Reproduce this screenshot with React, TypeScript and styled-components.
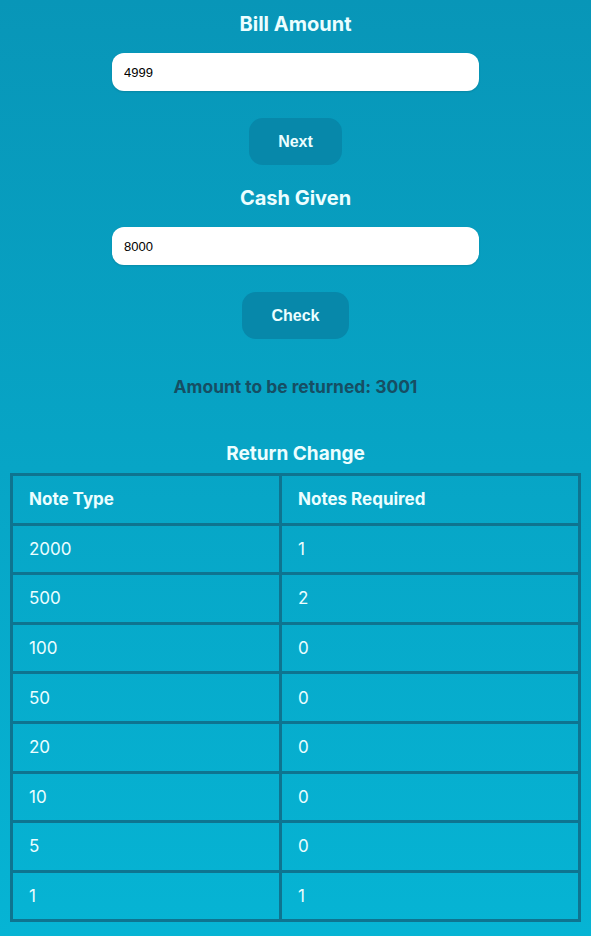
import React from "react";
import styled, { createGlobalStyle } from "styled-components";

const Global = createGlobalStyle`
  html, body { margin: 0; padding: 0; }
  body {
    min-height: 936px;
    background: linear-gradient(180deg, #0896b8 0%, #06b4d4 100%);
    font-family: Inter, "Open Sans", sans-serif;
    color: #ecfeff;
  }
`;

const Page = styled.main`
  display: flex;
  flex-direction: column;
  align-items: center;
  padding-top: 12px;
  padding-bottom: 14px;
`;

const Heading = styled.h2<{ $top: number; $size?: number }>`
  margin: ${(p) => p.$top}px 0 0;
  font-size: ${(p) => p.$size || 20}px;
  line-height: 24px;
  font-weight: 700;
  color: #ecfeff;
`;

const Input = styled.input`
  box-sizing: border-box;
  width: 367px;
  height: 38px;
  margin-top: 17px;
  border: none;
  border-radius: 12px;
  background: #fff;
  padding: 0 12px;
  font-family: "Liberation Sans", Arial, sans-serif;
  font-size: 13px;
  color: #000;
  box-shadow: 0 1px 2px rgba(0, 0, 0, 0.12);
  outline: none;
`;

const Button = styled.button<{ $w: number }>`
  box-sizing: border-box;
  width: ${(p) => p.$w}px;
  height: 47px;
  margin-top: 27px;
  border: none;
  border-radius: 14px;
  background: #0788aa;
  color: #ecfeff;
  font-family: "Liberation Sans", Arial, sans-serif;
  font-size: 16px;
  font-weight: 700;
`;

const Result = styled.p`
  margin: 37px 0 0;
  font-size: 17.4px;
  line-height: 22px;
  font-weight: 700;
  color: #164e63;
`;

const Table = styled.table`
  margin-top: 7px;
  width: 571px;
  border-collapse: collapse;
  border: 3px solid #0e7490;
`;

const Th = styled.th<{ $w?: string }>`
  width: ${(p) => p.$w || "auto"};
  height: 46.6px;
  border: 3px solid #0e7490;
  text-align: left;
  padding: 0 16px;
  font-size: 17px;
  font-weight: 700;
  color: #ecfeff;
`;

const Td = styled.td`
  height: 46.6px;
  border: 3px solid #0e7490;
  padding: 0 16px;
  font-size: 17px;
  font-weight: 400;
  color: #ecfeff;
`;

const rows: [number, number][] = [
  [2000, 1],
  [500, 2],
  [100, 0],
  [50, 0],
  [20, 0],
  [10, 0],
  [5, 0],
  [1, 1],
];

export default function App() {
  return (
    <>
      <Global />
      <Page>
        <Heading $top={0}>Bill Amount</Heading>
        <Input type="number" defaultValue="4999" />
        <Button $w={93}>Next</Button>
        <Heading $top={21}>Cash Given</Heading>
        <Input type="number" defaultValue="8000" />
        <Button $w={107}>Check</Button>
        <Result>Amount to be returned: 3001</Result>
        <Heading $top={44} $size={19}>Return Change</Heading>
        <Table>
          <thead>
            <tr>
              <Th $w="234px">Note Type</Th>
              <Th>Notes Required</Th>
            </tr>
          </thead>
          <tbody>
            {rows.map(([n, c]) => (
              <tr key={n}>
                <Td>{n}</Td>
                <Td>{c}</Td>
              </tr>
            ))}
          </tbody>
        </Table>
      </Page>
    </>
  );
}
